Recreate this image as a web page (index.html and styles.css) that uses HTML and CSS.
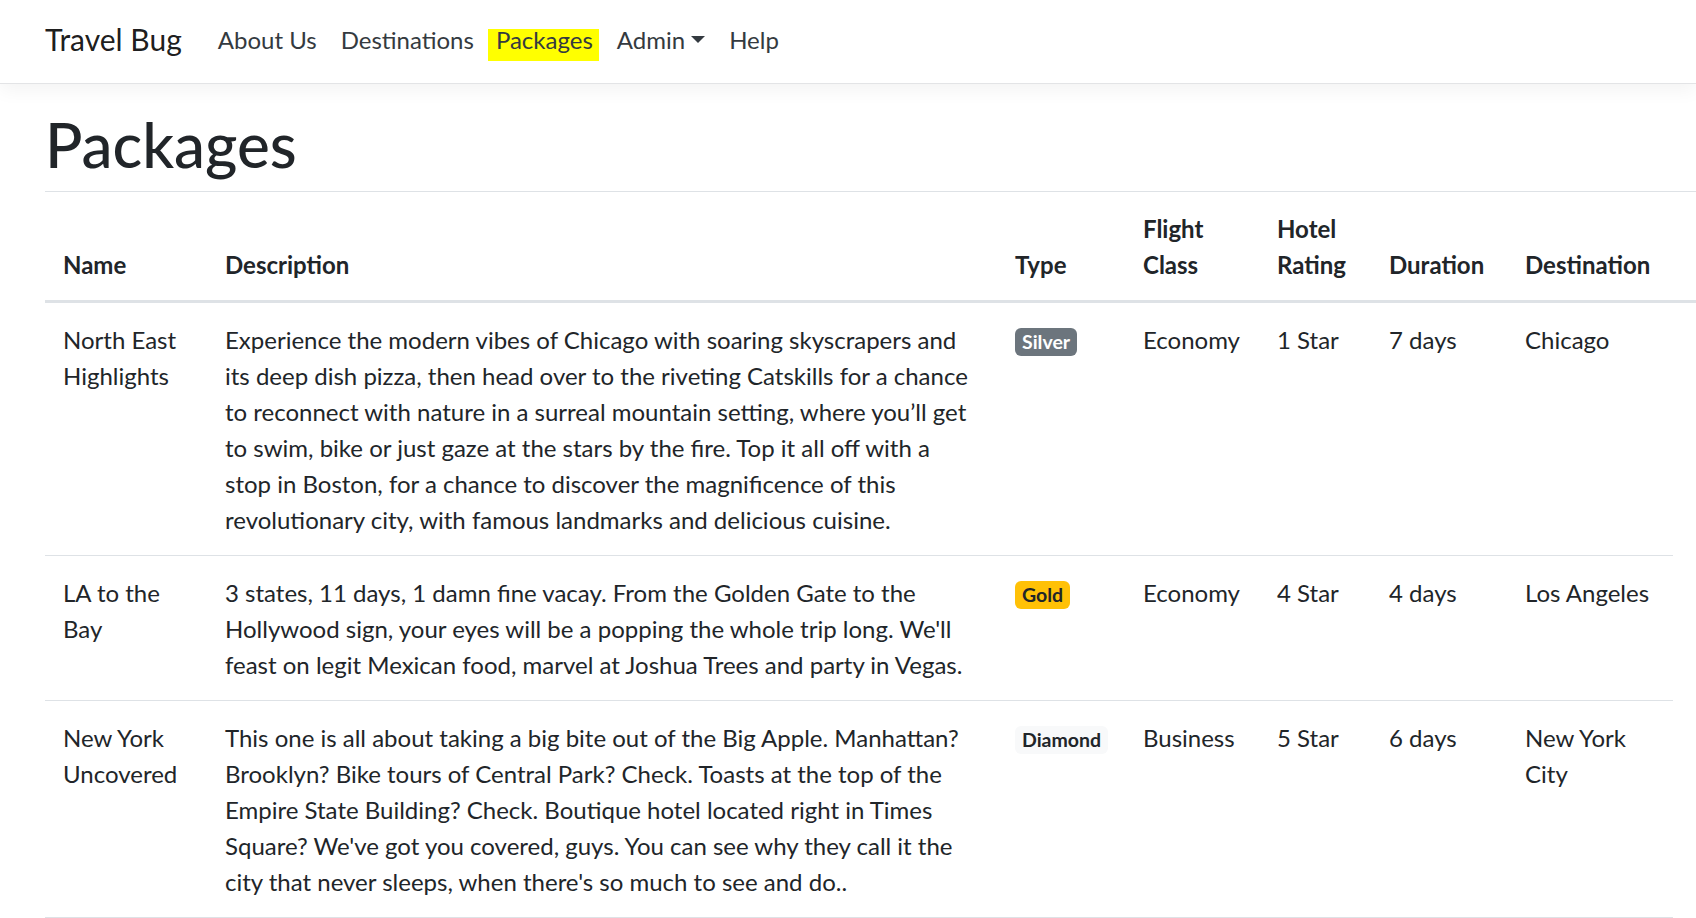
FILE: index.html
```html
<!DOCTYPE html>
<html lang="en">
<head>
<meta charset="utf-8">
<title>Packages - Travel Bug</title>
<link rel="stylesheet" href="styles.css">
</head>
<body>
<header class="site-header">
  <nav class="navbar">
    <a class="brand" href="#">Travel Bug</a>
    <ul class="nav-links">
      <li><a class="nav-link" href="#">About Us</a></li>
      <li><a class="nav-link" href="#">Destinations</a></li>
      <li><a class="nav-link nav-link-hl" href="#"><span class="hl">Packages</span></a></li>
      <li><a class="nav-link dropdown-toggle" href="#">Admin</a></li>
      <li><a class="nav-link" href="#">Help</a></li>
    </ul>
  </nav>
</header>
<main class="content">
  <h1 class="page-title">Packages</h1>
  <table class="table">
    <colgroup>
      <col class="c-name">
      <col class="c-desc">
      <col class="c-type">
      <col class="c-flight">
      <col class="c-hotel">
      <col class="c-dur">
      <col class="c-dest">
    </colgroup>
    <thead>
      <tr>
        <th>Name</th>
        <th>Description</th>
        <th>Type</th>
        <th>Flight Class</th>
        <th>Hotel Rating</th>
        <th>Duration</th>
        <th>Destination</th>
      </tr>
    </thead>
    <tbody>
      <tr>
        <td>North East Highlights</td>
        <td class="desc">Experience the modern vibes of Chicago with soaring skyscrapers and its deep dish pizza, then head over to the riveting Catskills for a chance to reconnect with nature in a surreal mountain setting, where you’ll get to swim, bike or just gaze at the stars by the fire. Top it all off with a stop in Boston, for a chance to discover the magnificence of this revolutionary city, with famous landmarks and delicious cuisine.</td>
        <td><span class="badge badge-silver">Silver</span></td>
        <td>Economy</td>
        <td>1 Star</td>
        <td>7 days</td>
        <td>Chicago</td>
      </tr>
      <tr>
        <td>LA to the Bay</td>
        <td class="desc">3 states, 11 days, 1 damn fine vacay. From the Golden Gate to the Hollywood sign, your eyes will be a popping the whole trip long. We'll feast on legit Mexican food, marvel at Joshua Trees and party in Vegas.</td>
        <td><span class="badge badge-gold">Gold</span></td>
        <td>Economy</td>
        <td>4 Star</td>
        <td>4 days</td>
        <td>Los Angeles</td>
      </tr>
      <tr>
        <td>New York Uncovered</td>
        <td class="desc">This one is all about taking a big bite out of the Big Apple. Manhattan? Brooklyn? Bike tours of Central Park? Check. Toasts at the top of the Empire State Building? Check. Boutique hotel located right in Times Square? We've got you covered, guys. You can see why they call it the city that never sleeps, when there's so much to see and do..</td>
        <td><span class="badge badge-diamond">Diamond</span></td>
        <td>Business</td>
        <td>5 Star</td>
        <td>6 days</td>
        <td>New York City</td>
      </tr>
    </tbody>
  </table>
</main>
</body>
</html>
```
FILE: styles.css
```css
* { box-sizing: border-box; }

html, body {
  margin: 0;
  padding: 0;
  background: #fff;
}

body {
  font-family: "Lato", "Liberation Sans", sans-serif;
  font-size: 24px;
  line-height: 36px;
  color: #212529;
  overflow: hidden;
}

a { text-decoration: none; }

/* ---------- navbar ---------- */
.site-header {
  margin-bottom: 24px;
}

.navbar {
  display: flex;
  align-items: center;
  height: 84px;
  padding: 0 0 4px 45px;
  background: #fff;
  border-bottom: 1px solid #e3e4e6;
  box-shadow: 0 6px 18px rgba(0, 0, 0, 0.05);
}

.brand {
  font-size: 30px;
  line-height: 45px;
  color: rgba(0, 0, 0, 0.9);
  margin-right: 24px;
}

.nav-links {
  display: flex;
  align-items: center;
  list-style: none;
  margin: 0;
  padding: 0;
}

.nav-link {
  display: block;
  padding: 0 12px;
  font-size: 24px;
  line-height: 36px;
  color: #343a40;
}

.nav-link-hl {
  padding: 0 6px 0 2px;
}

.hl {
  display: inline-block;
  padding: 3px 6px 3px 8px;
  background: linear-gradient(to bottom, transparent 10px, #ffff00 10px);
}

.dropdown-toggle::after {
  content: "";
  display: inline-block;
  margin-left: 6px;
  vertical-align: 6px;
  border-top: 7px solid #343a40;
  border-right: 7px solid transparent;
  border-left: 7px solid transparent;
}

/* ---------- content ---------- */
.content {
  padding-left: 45px;
}

.page-title {
  margin: 3px 0 11px;
  font-size: 62px;
  line-height: 72px;
  font-weight: 500;
  color: #212529;
}

.table {
  width: 1651px;
  border-collapse: separate;
  border-spacing: 0;
  table-layout: fixed;
}

.c-name { width: 162px; }
.c-desc { width: 790px; }
.c-type { width: 128px; }
.c-flight { width: 134px; }
.c-hotel { width: 112px; }
.c-dur { width: 136px; }
.c-dest { width: 189px; }

.table th,
.table td {
  padding: 19px 18px 17px;
  text-align: left;
  vertical-align: top;
}

.table th:last-child,
.table td:last-child {
  padding-right: 41px;
}

.table thead th {
  vertical-align: bottom;
  font-weight: 700;
  border-top: 1px solid #dee2e6;
  border-bottom: 3px solid #dee2e6;
}

.table tbody tr + tr td {
  border-top: 1px solid #dee2e6;
}

.table tbody tr:last-child td {
  border-bottom: 1px solid #dee2e6;
}

/* body row lines stop short of the right edge in the last column */
.table tbody tr + tr td:last-child {
  border-top-color: transparent;
  background: linear-gradient(#dee2e6, #dee2e6) no-repeat left top / calc(100% - 23px) 1px;
  background-origin: border-box;
}

.table tbody tr:last-child td:last-child {
  border-bottom-color: transparent;
  background:
    linear-gradient(#dee2e6, #dee2e6) no-repeat left top / calc(100% - 23px) 1px,
    linear-gradient(#dee2e6, #dee2e6) no-repeat left bottom / calc(100% - 23px) 1px;
  background-origin: border-box;
}

.desc {
  padding-right: 18px;
}

/* ---------- badges ---------- */
.badge {
  display: inline-block;
  padding: 4.5px 7px;
  font-size: 19.5px;
  font-weight: 700;
  line-height: 1;
  white-space: nowrap;
  vertical-align: baseline;
  border-radius: 6px;
}

.badge-silver {
  background: #6c757d;
  color: #fff;
}

.badge-gold {
  background: #ffc107;
  color: #212529;
}

.badge-diamond {
  background: #f8f9fa;
  color: #212529;
}
```
